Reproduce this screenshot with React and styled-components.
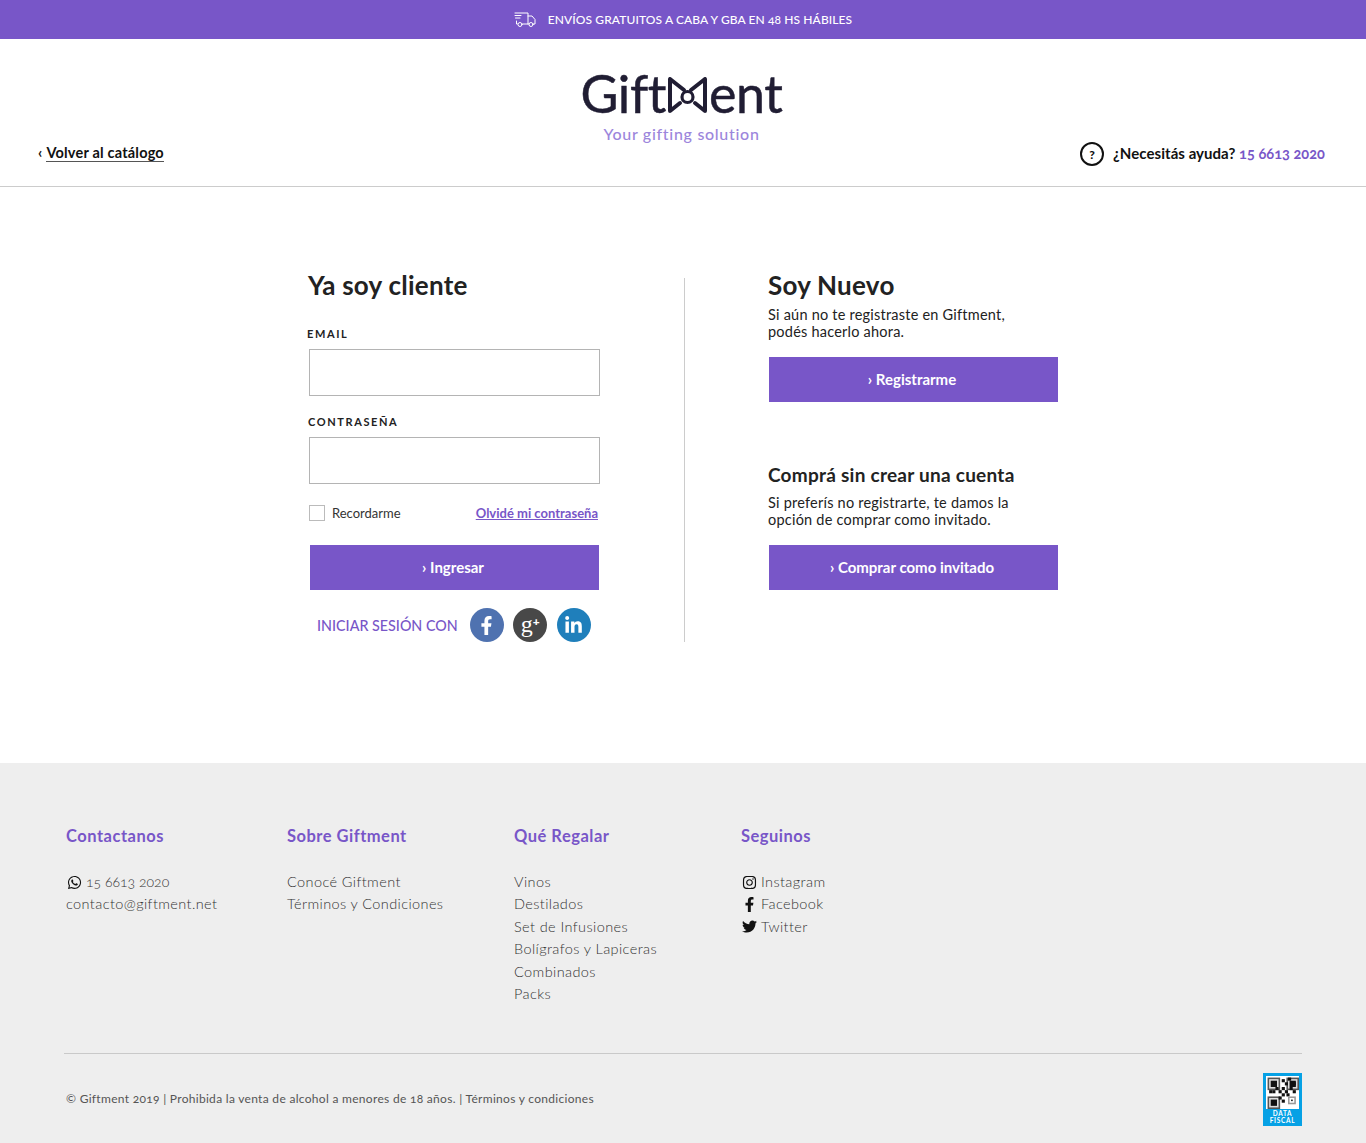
import React from "react";
import styled, { createGlobalStyle } from "styled-components";
import { FaWhatsapp, FaInstagram, FaFacebookF, FaTwitter, FaLinkedinIn } from "react-icons/fa";

const purple = "#7856c8";
const Global = createGlobalStyle`
  html, body { margin: 0; padding: 0; background: #fff; }
  body { font-family: "Lato", "Open Sans", sans-serif; color: #222; font-variant-numeric: oldstyle-nums; }
  * { box-sizing: border-box; }
`;
const Page = styled.div`width: 1366px; height: 1143px; overflow: hidden;`;
const TopBar = styled.div`
  height: 39px; background: ${purple}; color: #fff; display: flex; align-items: center;
  justify-content: center; font-size: 12px; font-weight: 500; gap: 12px; letter-spacing: .1px;
`;
const Header = styled.header`
  height: 148px; border-bottom: 1px solid #ccc; display: grid; grid-template-columns: 1fr auto 1fr;
  padding: 0 41px 0 38px;
`;
const Back = styled.div`
  align-self: end; margin-bottom: 25px; font-size: 14.5px; font-weight: 700; color: #111; letter-spacing: .2px;
  a { color: inherit; text-decoration: none; border-bottom: 1px solid #555; margin-left: 4px; }
`;
const Logo = styled.div`
  display: flex; flex-direction: column; align-items: center; padding-top: 26px;
`;
const LogoWord = styled.div`
  display: flex; align-items: center; height: 56px; font-family: "Lato", sans-serif; font-size: 52px;
  font-weight: 400; color: #201d33; letter-spacing: -0.4px; line-height: 1; -webkit-text-stroke: .5px #201d33;
`;
const LogoTag = styled.div`font-size: 16px; font-weight: 500; color: #9c86dc; letter-spacing: .7px; margin-top: 3px;`;
const Help = styled.div`
  align-self: end; justify-self: end; margin-bottom: 20px; display: flex; align-items: center; gap: 9px;
  font-size: 15px; font-weight: 700; color: #111; letter-spacing: .05px;
  b { color: ${purple}; font-weight: 700; font-size: 14.5px; }
`;
const HelpText = styled.span`padding-bottom: 3px;`;
const HelpMark = styled.span`
  width: 24px; height: 24px; border: 2px solid #111; border-radius: 50%; display: flex; align-items: center;
  justify-content: center; font-size: 12px; font-weight: 900;
`;
const Main = styled.main`height: 576px; display: flex; padding: 81px 0 0 308px;`;
const LoginCol = styled.section`width: 292px;`;
const Divider = styled.div`width: 1px; height: 364px; margin: 10px 83px 0 84px; background: #ccc;`;
const RightCol = styled.section`width: 291px;`;
const Title = styled.h2`margin: 0; font-size: 26px; line-height: 34px; font-weight: 700; color: #222; letter-spacing: .25px;`;
const SubTitle = styled.h3`margin: 60px 0 0; font-size: 19px; line-height: 26px; font-weight: 700; color: #222; letter-spacing: .25px;`;
const Label = styled.label`
  display: block; font-size: 11px; font-weight: 700; letter-spacing: 1.6px; line-height: 14px; color: #222;
  margin-left: ${p => p.$shift || 0}px; margin-top: ${p => p.$top}px;
`;
const Input = styled.div`
  width: 291px; height: 47px; margin: 8px 0 0 1px; border: 1px solid #b4b4b4; background: #fff;
`;
const Options = styled.div`
  display: flex; justify-content: space-between; align-items: center; margin: 20px 2px 0 1px; height: 18px;
`;
const Remember = styled.span`display: flex; align-items: center; gap: 7px; font-size: 13px; color: #333;`;
const Check = styled.span`width: 16px; height: 16px; border: 1px solid #bbb;`;
const Forgot = styled.a`font-size: 13px; font-weight: 700; color: ${purple}; text-decoration: underline;`;
const Button = styled.button`
  display: block; width: 289px; height: 45px; border: 0; background: ${purple}; color: #fff; font: inherit;
  font-size: 15px; font-weight: 700; text-align: center; padding: 0 3px 2px 0;
  margin: ${p => p.$top}px 0 0 ${p => p.$left}px;
`;
const Social = styled.div`display: flex; align-items: center; margin: 18px 0 0 9px; height: 34px;`;
const SocialLabel = styled.span`font-size: 14.3px; font-weight: 500; color: ${purple}; margin-right: 12px; width: 141px; white-space: nowrap;`;
const Round = styled.span`
  width: 34px; height: 34px; border-radius: 50%; background: ${p => p.$bg}; color: #fff; display: flex;
  align-items: center; justify-content: center; font-size: 19px; margin-right: 9.5px;
`;
const SerifGlyph = styled.span`font-family: "Liberation Serif", serif; font-size: 24px; line-height: 1; margin-top: -3px; font-variant-numeric: normal;
  sup { font-family: "Lato", sans-serif; font-size: 12px; font-weight: 900; vertical-align: 6px; line-height: 0; }
`;
const Lead = styled.p`margin: ${p => p.$top || 0}px 0 0; font-size: 14.5px; line-height: 17px; color: #222; letter-spacing: .22px;`;
const Footer = styled.footer`height: 380px; background: #eee; padding: 61px 64px 0 64px;`;
const Columns = styled.div`display: grid; grid-template-columns: 221px 227px 227px 1fr; height: 229px; padding-left: 2px;`;
const ColTitle = styled.h4`margin: 0 0 23px; font-size: 16.5px; line-height: 24px; font-weight: 700; color: ${purple}; letter-spacing: .5px;`;
const FootLink = styled.div`
  display: flex; align-items: center; font-size: 14.5px; line-height: 22.4px; height: 22.4px; color: #333;
  font-weight: 300; letter-spacing: .4px; white-space: nowrap;
`;
const FootNum = styled.span`font-size: 14px; letter-spacing: 0;`;
const FootIcon = styled.span`
  display: inline-flex; width: 16px; justify-content: center; margin-right: 4px; color: #111; font-size: 15px;
`;
const Bottom = styled.div`
  border-top: 1px solid #c9c9c9; display: flex; justify-content: space-between; align-items: flex-start;
  padding: 19px 0 0 2px;
`;
const Legal = styled.div`font-size: 12px; line-height: 15px; color: #555; margin-top: 18px; letter-spacing: .3px; font-weight: 400;`;
const Fiscal = styled.div`
  width: 39px; height: 53px; background: #06a1e5; padding: 3px 3px 0; display: flex; flex-direction: column; align-items: center;
  color: #fff; font-size: 6.5px; line-height: 6.5px; font-weight: 700; text-align: center; letter-spacing: .7px;
  svg { display: block; margin-bottom: 2px; }
`;

const BowSvg = styled.svg`margin: 4px 1px 0;`;
const Bow = () => (
  <BowSvg width="41" height="38" viewBox="0 0 41 38" fill="none" stroke="#201d33" strokeWidth="4" strokeLinejoin="round" strokeLinecap="round">
    <path d="M3 3 V35 L13 27 M3 3 L17 14" />
    <path d="M38 3 V35 L28 27 M38 3 L24 14" />
    <circle cx="20.5" cy="21" r="5.5" strokeWidth="3.2" />
  </BowSvg>
);

const Truck = () => (
  <svg width="22" height="15" viewBox="0 0 22 15" fill="none" stroke="#fff" strokeWidth="1" strokeLinecap="round" strokeLinejoin="round">
    <path d="M1 1 H14 V12 H8.5 M3.5 12 H2.5 V9 M1 3.5 H7 M1.5 6 H6" />
    <path d="M14 4 H18 L21 7.5 V12 H19 M14 12 H15" />
    <circle cx="6" cy="12.5" r="2" /><circle cx="17" cy="12.5" r="2" />
  </svg>
);

const qrCells = [[9,1],[11,3],[13,0],[0,6],[1,8],[5,6],[7,8],[9,6],[11,8],[14,6],[16,8],[9,10],[3,8],[7,12],[12,10],[16,3],[9,14],[14,14]];
const Finder = ({ x, y }) => (
  <g>
    <rect x={x} y={y} width="8" height="8" fill="#555" />
    <rect x={x + 1} y={y + 1} width="6" height="6" fill="#ddd" />
    <rect x={x + 2} y={y + 2} width="4" height="4" fill="#111" />
  </g>
);
const Qr = () => (
  <svg width="33" height="33" viewBox="0 0 21 21">
    <rect width="21" height="21" fill="#fff" />
    <Finder x={1} y={1} /><Finder x={13} y={1} /><Finder x={1} y={13} />
    {qrCells.filter(([x, y]) => !(x < 9 && y < 9 && (x < 1 || y < 1))).map(([x, y]) => (
      <rect key={x + "-" + y} x={x + 1} y={y + 1} width="2" height="2" fill="#111" />
    ))}
    <rect x="14" y="13" width="5" height="5" fill="#999" /><rect x="15" y="14" width="3" height="3" fill="#fff" /><rect x="16" y="15" width="1" height="1" fill="#111" />
  </svg>
);

export default function App() {
  return (
    <Page>
      <Global />
      <TopBar><Truck /><span>ENVÍOS GRATUITOS A CABA Y GBA EN 48 HS HÁBILES</span></TopBar>
      <Header>
        <Back>‹<a>Volver al catálogo</a></Back>
        <Logo>
          <LogoWord>Gift<Bow />ent</LogoWord>
          <LogoTag>Your gifting solution</LogoTag>
        </Logo>
        <Help><HelpMark>?</HelpMark><HelpText>¿Necesitás ayuda? <b>15 6613 2020</b></HelpText></Help>
      </Header>
      <Main>
        <LoginCol>
          <Title>Ya soy cliente</Title>
          <Label $top={25} $shift={-1}>EMAIL</Label>
          <Input />
          <Label $top={19}>CONTRASEÑA</Label>
          <Input />
          <Options>
            <Remember><Check />Recordarme</Remember>
            <Forgot>Olvidé mi contraseña</Forgot>
          </Options>
          <Button $top={23} $left={2}>› Ingresar</Button>
          <Social>
            <SocialLabel>INICIAR SESIÓN CON</SocialLabel>
            <Round $bg="#4f72b0"><FaFacebookF /></Round>
            <Round $bg="#484848"><SerifGlyph>g<sup>+</sup></SerifGlyph></Round>
            <Round $bg="#1f7fbb"><FaLinkedinIn /></Round>
          </Social>
        </LoginCol>
        <Divider />
        <RightCol>
          <Title>Soy Nuevo</Title>
          <Lead $top={4}>Si aún no te registraste en Giftment,<br />podés hacerlo ahora.</Lead>
          <Button $top={17} $left={1}>› Registrarme</Button>
          <SubTitle>Comprá sin crear una cuenta</SubTitle>
          <Lead $top={6}>Si preferís no registrarte, te damos la<br />opción de comprar como invitado.</Lead>
          <Button $top={17} $left={1}>› Comprar como invitado</Button>
        </RightCol>
      </Main>
      <Footer>
        <Columns>
          <div>
            <ColTitle>Contactanos</ColTitle>
            <FootLink><FootIcon><FaWhatsapp /></FootIcon><FootNum>15 6613 2020</FootNum></FootLink>
            <FootLink>contacto@giftment.net</FootLink>
          </div>
          <div>
            <ColTitle>Sobre Giftment</ColTitle>
            <FootLink>Conocé Giftment</FootLink>
            <FootLink>Términos y Condiciones</FootLink>
          </div>
          <div>
            <ColTitle>Qué Regalar</ColTitle>
            {["Vinos","Destilados","Set de Infusiones","Bolígrafos y Lapiceras","Combinados","Packs"].map(t => <FootLink key={t}>{t}</FootLink>)}
          </div>
          <div>
            <ColTitle>Seguinos</ColTitle>
            <FootLink><FootIcon><FaInstagram /></FootIcon>Instagram</FootLink>
            <FootLink><FootIcon><FaFacebookF /></FootIcon>Facebook</FootLink>
            <FootLink><FootIcon><FaTwitter /></FootIcon>Twitter</FootLink>
          </div>
        </Columns>
        <Bottom>
          <Legal>© Giftment 2019 | Prohibida la venta de alcohol a menores de 18 años. | Términos y condiciones</Legal>
          <Fiscal><Qr /><span>DATA<br />FISCAL</span></Fiscal>
        </Bottom>
      </Footer>
    </Page>
  );
}
